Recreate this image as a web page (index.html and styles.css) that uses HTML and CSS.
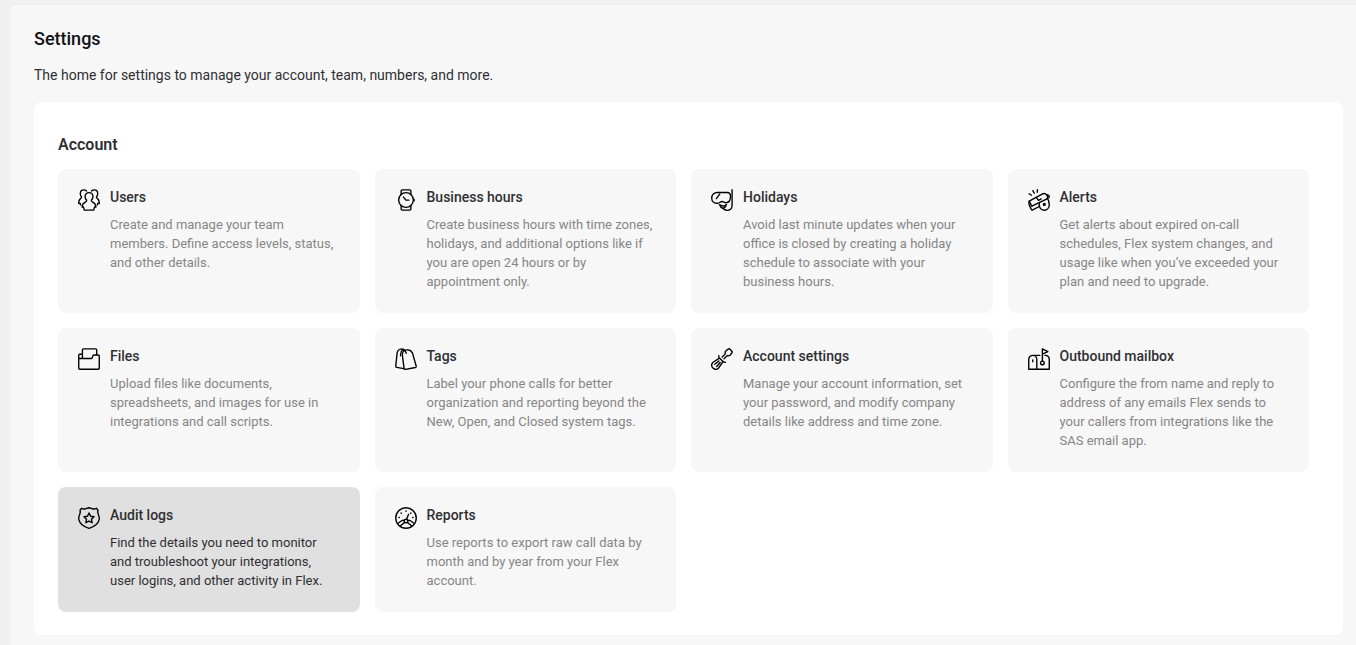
FILE: index.html
```html
<!DOCTYPE html>
<html lang="en">
<head>
    <meta charset="UTF-8">
    <meta name="viewport" content="width=device-width, initial-scale=1">
    <title>Settings</title>
    <link rel="stylesheet" href="styles.css">
</head>
<body>

<main class="page">
    <h1>Settings</h1>
    <p class="intro">The home for settings to manage your account, team, numbers, and more.</p>

    <section class="panel">
        <h2>Account</h2>
        <div class="tiles">

            <a class="tile" href="#users">
                <svg class="icon" viewBox="0 0 24 24" aria-hidden="true">
                    <path d="M9.500 12.400c-1.100-1-1.800-2.500-1.800-4.200C7.700 5.600 9.500 3.900 12 3.900s4.300 1.700 4.300 4.300c0 1.700-.7 3.200-1.800 4.200 0 1.200.6 1.600 1.900 2.100 2 .8 3 2.400 3.200 5.200H18l-.9 3.300H6.900L6 19.700H4.400c.2-2.800 1.200-4.400 3.200-5.200 1.300-.5 1.900-.9 1.900-2.100z"/>
                    <path d="M9.300 2.200C8.500 1.300 7.400.9 6.300.9 4 .9 2.500 2.600 2.500 5c0 1.600.5 2.800 1.400 3.700 0 1-.6 1.500-1.400 2-1.300.8-1.700 2.500-1.700 5.100h1.700l.4 1.500"/>
                    <path d="M14.700 2.200c.8-.9 1.900-1.300 3-1.300 2.300 0 3.800 1.700 3.800 4.100 0 1.600-.5 2.800-1.400 3.700 0 1 .6 1.500 1.400 2 1.300.8 1.700 2.500 1.700 5.100h-1.700l-.4 1.500"/>
                </svg>
                <div>
                    <h3>Users</h3>
                    <p>Create and manage your team members. Define access levels, status, and other details.</p>
                </div>
            </a>

            <a class="tile" href="#business-hours">
                <svg class="icon" viewBox="0 0 24 24" aria-hidden="true">
                    <circle cx="12" cy="12" r="8"/>
                    <path d="M6.700 6V2.200C6.700 1.500 7.200 1 7.900 1h8.200c.7 0 1.200.5 1.200 1.200V6M6.700 18v3.800c0 .7.500 1.200 1.200 1.200h8.200c.7 0 1.200-.5 1.200-1.200V18"/>
                    <path d="M9.200 8.800l2.800 3.400h3.200M20.800 11v2"/>
                </svg>
                <div>
                    <h3>Business hours</h3>
                    <p>Create business hours with time zones, holidays, and additional options like if you are open 24 hours or by appointment only.</p>
                </div>
            </a>

            <a class="tile" href="#holidays">
                <svg class="icon" viewBox="0 0 24 24" aria-hidden="true">
                    <path d="M7 3.800h10.500c2.300 0 3.800 1.700 3.800 4.200 0 3.900-1.800 7-5 7-1.800 0-2.600-1.400-4.300-1.400-1.900 0-2.400 2-5 2-3.600 0-6.200-2.300-6.200-5.600C.8 6.300 3.400 3.800 7 3.800z"/>
                    <path d="M9.500 5.500L5.800 10.500"/>
                    <path d="M23 .8v17c0 3.300-2.300 5.500-5.200 5.500-2.100 0-3.700-.8-4.800-2.300"/>
                    <path d="M9 17.200c1.800 0 2.600 1.400 4.600 1.400 1.400 0 2.200-.5 3.200-1.600M9.800 17.500c.5 2 1.500 3.300 3.200 3.500 1.500 0 2.500-.9 3.300-2.600"/>
                </svg>
                <div>
                    <h3>Holidays</h3>
                    <p>Avoid last minute updates when your office is closed by creating a holiday schedule to associate with your business hours.</p>
                </div>
            </a>

            <a class="tile" href="#alerts">
                <svg class="icon" viewBox="0 0 24 24" aria-hidden="true">
                    <path d="M1.300 13.200L15.500 5.500c1.800-.9 3.800-.4 5 1.100 1.300 1.700 1.500 3.400.2 4.200L4.200 18.800z"/>
                    <path d="M1.300 13.200c-.5 1.700-.3 3.300.3 4.700l2 4.300c.3.600.9.800 1.500.5l7.200-3.600"/>
                    <path d="M9 9.200l2.400 3.200 3-1.600M12.300 15.200c-.9 4.300 1.600 8 5.400 8 3.300 0 5.500-2.700 5.500-6 0-3-.7-5.200-2.200-7.200"/>
                    <path d="M20.600 6.600c1.600-.3 2.600.4 2.600 1.600s-.7 1.900-1.900 1.900"/>
                    <circle cx="17.800" cy="16.800" r="1"/>
                    <path d="M1.200 5.200l2.600 1.600M5.300 1.800l1.500 2.900M10.300.8l-.2 2.700"/>
                </svg>
                <div>
                    <h3>Alerts</h3>
                    <p>Get alerts about expired on-call schedules, Flex system changes, and usage like when you’ve exceeded your plan and need to upgrade.</p>
                </div>
            </a>

            <a class="tile" href="#files">
                <svg class="icon" viewBox="0 0 24 24" aria-hidden="true">
                    <path d="M4.800 6.800H2c-.7 0-1.200.5-1.200 1.200v14c0 .7.500 1.200 1.200 1.200h20c.7 0 1.200-.5 1.200-1.200V8.800c0-.7-.5-1.200-1.200-1.200h-4.500c-.6 0-1 .3-1.200.8l-.8 2.200c-.2.600-.6.900-1.200.9H.8"/>
                    <path d="M4.800 11.300V2.200C4.800 1.500 5.300 1 6 1h13.200c.7 0 1.200.5 1.200 1.200v5.300"/>
                </svg>
                <div>
                    <h3>Files</h3>
                    <p>Upload files like documents, spreadsheets, and images for use in integrations and call scripts.</p>
                </div>
            </a>

            <a class="tile" href="#tags">
                <svg class="icon" viewBox="0 0 24 24" aria-hidden="true">
                    <path d="M8 7.500c.1-2.800 1.700-5 4.500-5.400 2.500-.3 5.200.7 6.500 3.200l4.100 14.400c.2.800-.2 1.400-.9 1.600l-10.800 2c-.8.100-1.400-.4-1.500-1.100z"/>
                    <path d="M9.500 22.500l-7.600-1.300c-.7-.1-1.200-.7-1.100-1.400L2.300 5.600C2.600 3.200 4.200 1.500 6.500 1.200c1.500-.2 2.800.2 3.900 1.300"/>
                    <path d="M12.300 5.800C11.500 3.400 10 1.500 8.300 2.300 6.800 3 6.200 5.500 6 8.500"/>
                </svg>
                <div>
                    <h3>Tags</h3>
                    <p>Label your phone calls for better organization and reporting beyond the New, Open, and Closed system tags.</p>
                </div>
            </a>

            <a class="tile" href="#account-settings">
                <svg class="icon" viewBox="0 0 24 24" aria-hidden="true">
                    <path d="M12.300 9.800l3.300-3.400c-.4-1.300-.1-2.500.8-3.400L18.700 1.200c.5-.5 1.200-.5 1.700 0l2.400 2.400c.5.500.5 1.200 0 1.700L21 7.600c-.9.900-2.100 1.200-3.400.8l-3.400 3.300"/>
                    <path d="M8.500 8.500c-.2 1 .1 1.800.7 2.500L1.900 15.800c-1.500 1.900-1.400 4.400.2 6 1.700 1.700 4.200 1.800 6 .3l5-7.300c.7.600 1.500.9 2.500.7M9.200 11l3.900 3.800"/>
                    <path d="M8.600 14.200l-4.500 3.600M10 15.800l-3.800 4.300"/>
                </svg>
                <div>
                    <h3>Account settings</h3>
                    <p>Manage your account information, set your password, and modify company details like address and time zone.</p>
                </div>
            </a>

            <a class="tile" href="#outbound-mailbox">
                <svg class="icon" viewBox="0 0 24 24" aria-hidden="true">
                    <path d="M13 8H5.200C2.700 8 .8 9.900.8 12.400v10.800h22.400V12.400c0-2.500-1.700-4.400-4.200-4.400h-.5M5.200 8c2.500 0 4.400 1.900 4.400 4.400v10.800"/>
                    <path d="M15.700 14.300V1l6 2.900-6 2.900"/>
                    <path d="M5.200 13v2"/>
                    <circle cx="15.700" cy="16.300" r="2"/>
                </svg>
                <div>
                    <h3>Outbound mailbox</h3>
                    <p>Configure the from name and reply to address of any emails Flex sends to your callers from integrations like the SAS email app.</p>
                </div>
            </a>

            <a class="tile active" href="#audit-logs">
                <svg class="icon" viewBox="0 0 24 24" aria-hidden="true">
                    <path d="M2.200 3.500L4 1.400c1.500 1 3.100 1.100 4.500.3L12 .8l3.500.9c1.400.8 3 .7 4.500-.3l1.800 2.100c-.6 2-.2 3.600.6 5.300.7 1.500 1 3.200.6 5.200-1.100 4.500-5.500 7.600-11 9.300C6.500 21.600 2.100 18.500 1 14c-.4-2-.1-3.700.6-5.200.8-1.700 1.200-3.300.6-5.300z"/>
                    <path d="M12 6.500l1.700 3.600 3.800.5-2.800 2.700.7 3.900-3.400-1.900-3.400 1.900.7-3.900-2.800-2.700 3.800-.5z"/>
                </svg>
                <div>
                    <h3>Audit logs</h3>
                    <p>Find the details you need to monitor and troubleshoot your integrations, user logins, and other activity in Flex.</p>
                </div>
            </a>

            <a class="tile" href="#reports">
                <svg class="icon" viewBox="0 0 24 24" aria-hidden="true">
                    <circle cx="12" cy="12" r="11.200"/>
                    <circle cx="12" cy="15.300" r="2"/>
                    <path d="M12.600 13.300l2.200-5.300M2.800 18l4.500-3c.9-.6 1.800-.6 2.700-.2M21.200 18l-4.500-3c-.9-.6-1.800-.6-2.700-.2M10.600 16.800l-4.600 3.700M13.400 16.800l4.600 3.700"/>
                    <path d="M12 4.200v.4M6.600 6.600l.3.300M17.400 6.600l-.3.300M4.300 11.500h.4M19.700 11.500h-.4"/>
                </svg>
                <div>
                    <h3>Reports</h3>
                    <p>Use reports to export raw call data by month and by year from your Flex account.</p>
                </div>
            </a>

        </div>
    </section>
</main>

</body>
</html>
```
FILE: styles.css
```css
* {
    box-sizing: border-box;
}

html {
    background: #f0f0f0;
}

body {
    margin: 0;
    padding: 5px 0 0 10px;
    min-height: 100vh;
    display: flex;
    font-family: Roboto, "Liberation Sans", sans-serif;
    color: #2f2f33;
}

h1, h2, h3, p {
    margin: 0;
}

.page {
    flex: 1;
    min-width: 0;
    padding: 22px 13px 8px 24px;
    background: #f7f7f7;
    border-top-left-radius: 8px;
}

h1 {
    font-size: 18px;
    line-height: 24px;
    font-weight: 500;
    color: #121217;
}

.intro {
    margin-top: 14px;
    font-size: 14px;
    line-height: 20px;
}

.panel {
    margin-top: 17px;
    padding: 31px 34px 23px 24px;
    background: #fff;
    border-radius: 8px;
}

h2 {
    margin-bottom: 12px;
    font-size: 16px;
    line-height: 24px;
    font-weight: 600;
}

.tiles {
    display: grid;
    grid-template-columns: repeat(4, 1fr);
    gap: 15px;
}

.tile {
    display: flex;
    gap: 10px;
    padding: 18px 22px 22px 20px;
    background: #f7f7f7;
    border-radius: 8px;
    color: #2f2f33;
    text-decoration: none;
}

.tile h3 {
    font-size: 14px;
    line-height: 20px;
    font-weight: 500;
}

.tile p {
    margin-top: 8px;
    font-size: 13px;
    line-height: 19px;
    color: #868686;
}

.tile:hover,
.tile.active {
    background: #e0e0e0;
}

.tile:hover p,
.tile.active p {
    color: #2f2f33;
}

.icon {
    flex: none;
    width: 22px;
    height: 22px;
    margin-top: 2px;
    fill: none;
    stroke: #000;
    stroke-width: 1.5;
    stroke-linecap: round;
    stroke-linejoin: round;
}

@media (max-width: 1000px) {
    .tiles {
        grid-template-columns: repeat(2, 1fr);
    }
}
```
